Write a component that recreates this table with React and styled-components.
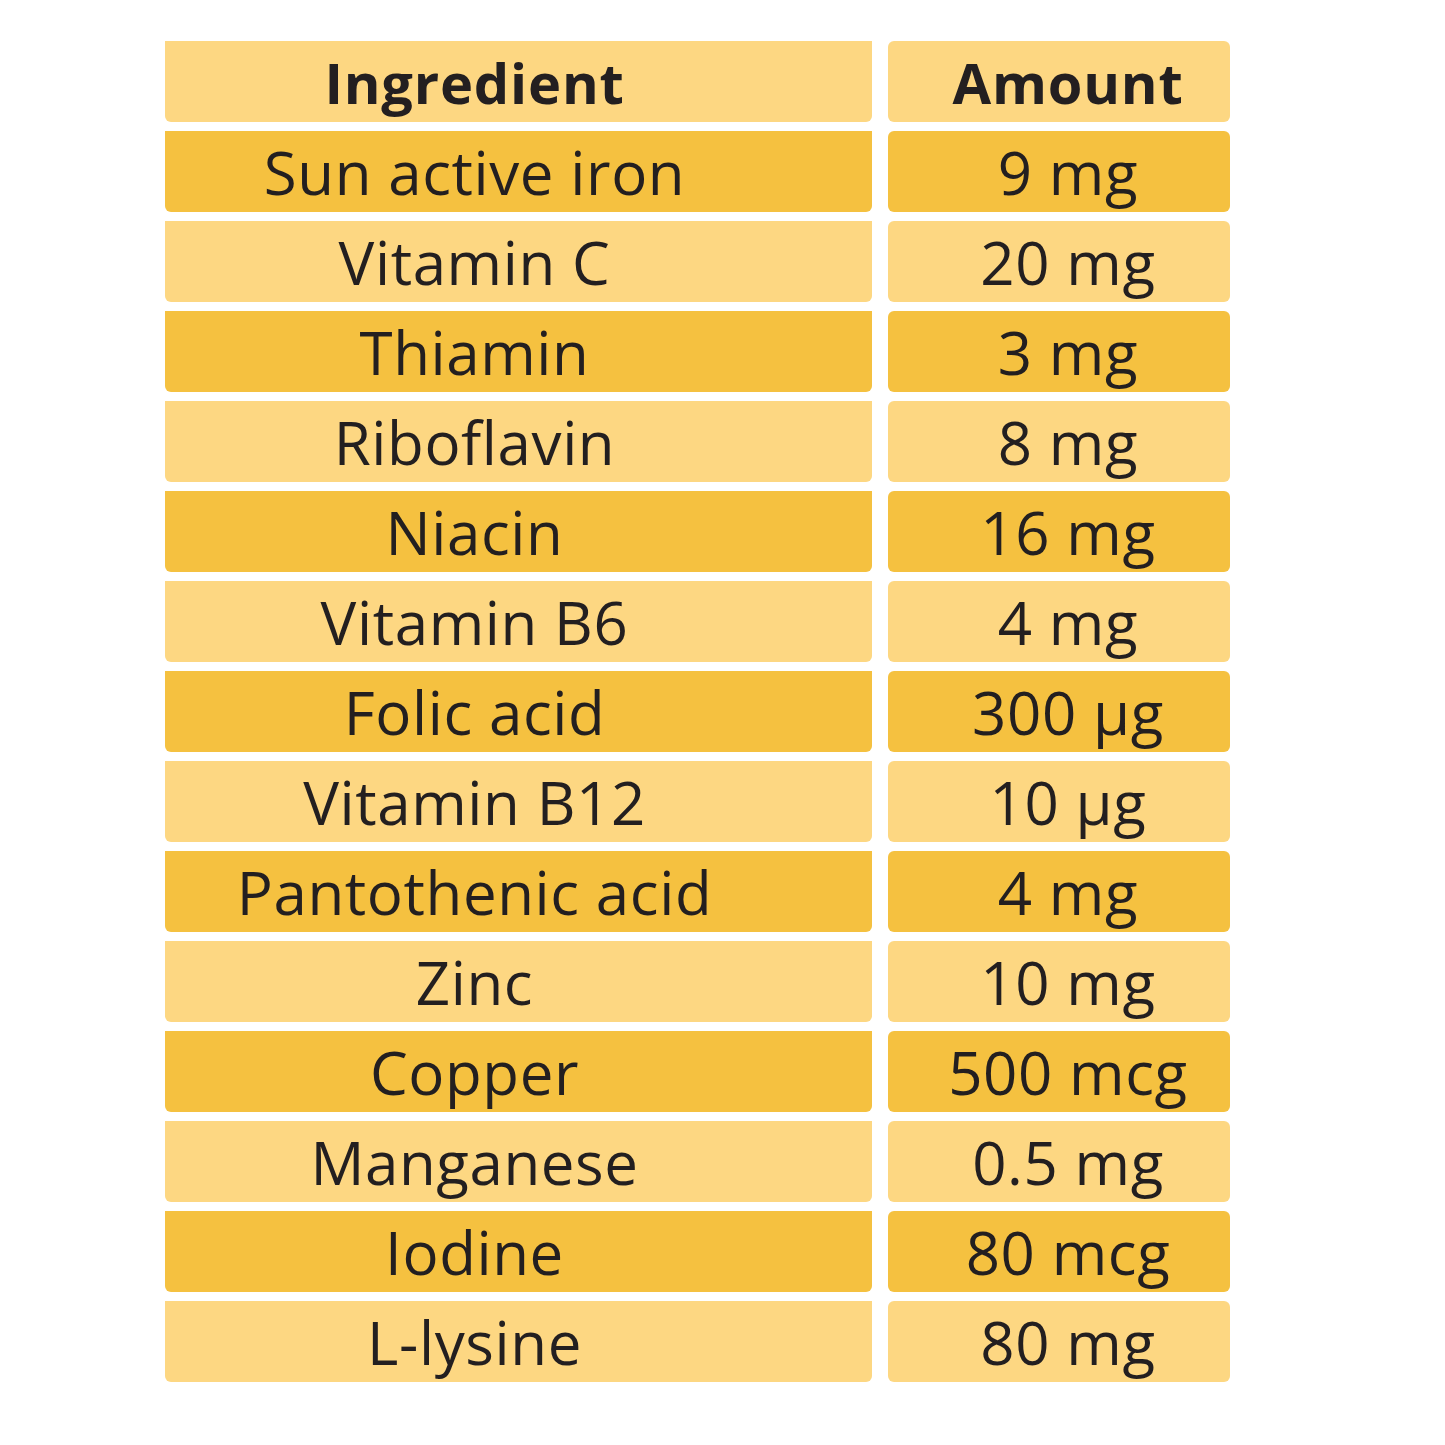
import React from "react";
import styled, { createGlobalStyle } from "styled-components";

const Global = createGlobalStyle`
  html, body { margin: 0; padding: 0; background: #ffffff; }
  body { font-family: "Open Sans", "Noto Sans", sans-serif; }
`;

const Page = styled.div`
  width: 1445px;
  height: 1445px;
  box-sizing: border-box;
  padding: 41px 0 0 165px;
  background: #ffffff;
`;

const Table = styled.div`
  display: grid;
  grid-template-columns: 707px 342px;
  grid-auto-rows: 81px;
  column-gap: 16px;
  row-gap: 9px;
`;

const Cell = styled.div`
  display: flex;
  align-items: center;
  justify-content: center;
  box-sizing: border-box;
  background: ${(p) => (p.$dark ? "#F5C140" : "#FDD782")};
  border-radius: ${(p) => (p.$side === "left" ? "0 0 6px 6px" : "6px")};
  padding: ${(p) => (p.$side === "left" ? "0 88px 0 0" : "0 0 0 18px")};
  color: #231f20;
  font-size: ${(p) => (p.$head ? "56px" : "60px")};
  font-weight: ${(p) => (p.$head ? 700 : 500)};
  letter-spacing: ${(p) => (p.$head ? "0.8px" : "0.6px")};
  line-height: 1;
  white-space: nowrap;
`;

const rows = [
  ["Sun active iron", "9 mg"],
  ["Vitamin C", "20 mg"],
  ["Thiamin", "3 mg"],
  ["Riboflavin", "8 mg"],
  ["Niacin", "16 mg"],
  ["Vitamin B6", "4 mg"],
  ["Folic acid", "300 µg"],
  ["Vitamin B12", "10 µg"],
  ["Pantothenic acid", "4 mg"],
  ["Zinc", "10 mg"],
  ["Copper", "500 mcg"],
  ["Manganese", "0.5 mg"],
  ["Iodine", "80 mcg"],
  ["L-lysine", "80 mg"],
];

export default function App() {
  return (
    <Page>
      <Global />
      <Table>
        <Cell $side="left" $head>Ingredient</Cell>
        <Cell $side="right" $head>Amount</Cell>
        {rows.map(([name, amount], i) => (
          <React.Fragment key={name}>
            <Cell $side="left" $dark={i % 2 === 0}>{name}</Cell>
            <Cell $side="right" $dark={i % 2 === 0}>{amount}</Cell>
          </React.Fragment>
        ))}
      </Table>
    </Page>
  );
}
